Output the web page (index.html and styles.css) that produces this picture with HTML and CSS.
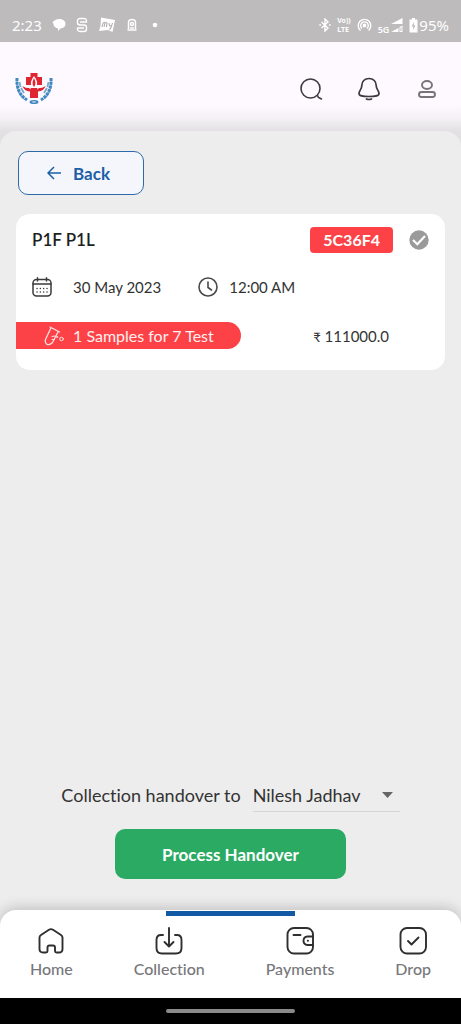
FILE: index.html
```html
<!DOCTYPE html>
<html lang="en">
<head>
<meta charset="utf-8">
<meta name="viewport" content="width=device-width, initial-scale=1">
<title>Collection handover</title>
<link rel="stylesheet" href="styles.css">
</head>
<body>
<div class="status">
  <div class="status-left">
    <span>2:23</span>
    <svg width="14" height="14" viewBox="0 0 14 14" fill="#fff"><path d="M7 1C10.500 1 13.500 2.800 13.500 6C13.500 9 11 10 8.500 10.500L6 13V10.500C3 10 1.500 8 1.500 6L.5 4L2.500 2.500Q4 1 7 1Z"/></svg>
    <svg width="12" height="16" viewBox="0 0 12 16" fill="none" stroke="#fff" stroke-width="1.400"><path d="M10.500 5.500V4Q10.500 1.500 8 1.500H4Q1.500 1.500 1.500 4V5.500Q1.500 8 4 8H8Q10.500 8 10.500 10.500V12Q10.500 14.500 8 14.500H4Q1.500 14.500 1.500 12V10.500M4 5H10.500M1.500 11H8"/></svg>
    <svg width="18" height="16" viewBox="0 0 18 16"><path fill="#fff" d="M3 .5L17 3L14.500 15L10 13L1 14L2.500 9Z"/><path d="M4 10L5 6Q7 4.500 7 6L6 10M7 6Q9 4.500 9 6L8.500 10M11 6L11.500 9H13M14.500 6L12.500 12H11" fill="none" stroke="#aaa8a9"/></svg>
    <svg width="12" height="16" viewBox="0 0 12 16" fill="none" stroke="#fff" stroke-width="1.500"><path d="M2.500 12V5.500Q2.500 2.500 6 2.500T9.500 5.500V12M1.500 13H10.500M4 11H8"/><circle cx="6" cy="7" r="1.500"/></svg>
    <svg class="more" width="6" height="6" viewBox="0 0 6 6"><circle cx="3" cy="3" r="2.300" fill="#fff"/></svg>
  </div>
  <div class="status-right">
    <svg width="12" height="14" viewBox="0 0 12 14" fill="none" stroke="#fff" stroke-width="1.400"><path d="M2.500 4L9 10L6 13V1L9 4L2.500 10M.3 7H2M10 7H11.700"/></svg>
    <span class="volte"><span>Vo))</span><span>LTE</span></span>
    <svg width="15" height="14" viewBox="0 0 15 14" fill="none" stroke="#fff" stroke-width="1.400"><path d="M3.500 12.500A6.300 6.300 0 1 1 11.500 12.500M5 10.500A3.800 3.800 0 1 1 10 10.500"/><circle cx="7.500" cy="7.500" r="1.200" fill="#fff"/></svg>
    <span class="net">5G</span>
    <svg class="signal" width="13" height="16" viewBox="0 0 13 16"><path fill="#fff" d="M1 7L12.500 1V7ZM1 15L8.500 11V15ZM9.500 10L12.500 8.500V15H9.500Z"/><path d="M10.500 11V14H11.500V10Z" fill="#bdbbbc"/></svg>
    <svg class="battery" width="9" height="15" viewBox="0 0 9 15"><path fill="#fff" d="M3 0H6V1.500H8.500V14.500H.5V1.500H3Z"/><path d="M5 4L2.500 8.500H4.200L4 12L6.500 7.500H4.800Z" fill="#bdbbbc"/></svg>
    <span>95%</span>
  </div>
</div>

<header class="header">
  <a class="logo" href="#" aria-label="Home page">
    <svg width="40" height="32" viewBox="0 0 40 32">
      <path d="M3 6Q2 20 10 26M37 6Q38 20 30 26" fill="none" stroke="#8db9da" stroke-width="1.500"/>
      <g fill="none" stroke="#4387bf" stroke-width="3">
        <path d="M3 5Q2 20 13 27" stroke-dasharray="3 .8"/>
        <path d="M37 5Q38 20 27 27" stroke-dasharray="3 .8"/>
      </g>
      <path d="M5.500 9L6.500 14M7 15L10 20M34.500 9L33.500 14M33 15L30 20" stroke="#75a9d1" stroke-width="1.800"/>
      <ellipse cx="20" cy="29" rx="4.500" ry="2" fill="#4387bf"/><ellipse cx="20" cy="29" rx="2" ry=".7" fill="#c9dfef"/>
      <path d="M16.500 0H23.500V4H28V12H12V4H16.500Z" fill="#e02430"/>
      <path d="M20 3Q15.500 9 17.500 13H22.500Q24.500 9 20 3Z" fill="#fff"/><path d="M20 5Q17 11 20 14Q23 11 20 5Z" fill="#e02430"/>
      <path d="M8.500 13Q11 15 18 15H22Q29 15 31.500 13Q30 18 24 18.500V25H16V18.500Q10 18 8.500 13Z" fill="#e02430"/>
      <path d="M11 14Q15 14 17 16M29 14Q25 14 23 16" fill="none" stroke="#fff" stroke-width=".8"/>
    </svg>
  </a>
  <div class="actions">
    <button aria-label="Search"><svg width="26" height="26" viewBox="0 0 26 26" fill="none" stroke="#3d393f" stroke-width="1.600" stroke-linecap="round"><circle cx="12.500" cy="12.500" r="9.500"/><path d="M19.500 19.500L20.500 21.500L23.500 23"/></svg></button>
    <button aria-label="Notifications"><svg width="26" height="26" viewBox="0 0 26 26" fill="none" stroke="#3d393f" stroke-width="1.700" stroke-linecap="round"><path d="M13 2.500C8.500 2.500 5.800 5.500 5.800 9.500C5.800 13.500 3 14.500 3 17.500C3 20 6 20.500 13 20.500S23 20 23 17.500C23 14.500 20.200 13.500 20.200 9.500C20.200 5.500 17.500 2.500 13 2.500Z"/><path d="M10.500 23Q13 24 15.500 23"/></svg></button>
    <button aria-label="Profile"><svg width="26" height="26" viewBox="0 0 26 26" fill="none" stroke="#77737a" stroke-width="1.900"><ellipse cx="13" cy="9" rx="5" ry="4"/><rect x="5" y="16" width="16" height="5" rx="2.500"/></svg></button>
  </div>
</header>

<main class="main">
  <button class="back"><svg width="14" height="14" viewBox="0 0 14 14" fill="none" stroke="#1b5fa6" stroke-width="1.500"><path d="M14 7H1.500M7 1L1 7L7 13"/></svg>Back</button>

  <article class="card">
    <div class="card-head">
      <h1>P1F P1L</h1>
      <span class="code">5C36F4</span>
      <svg width="20" height="20" viewBox="0 0 20 20"><circle cx="10" cy="10" r="9.700" fill="#9a9a9a"/><path d="M4 10L8.300 14.200L16 6" fill="none" stroke="#fff" stroke-width="2.200"/></svg>
    </div>
    <div class="when">
      <span class="date"><svg width="20" height="20" viewBox="0 0 20 20" fill="none" stroke="#3b3b3b" stroke-width="1.500" stroke-linecap="round"><rect x="1" y="2.500" width="18" height="16.500" rx="3.500"/><path d="M1 7H19M5.500 .8V4M14.500 .8V4"/><path d="M5 11.500H5.100M8.300 11.500H8.400M11.600 11.500H11.700M15 11.500H15.100M5 15H5.100M8.300 15H8.400M11.600 15H11.700M15 15H15.100" stroke-width="1.400"/></svg>30 May 2023</span>
      <span class="time"><svg width="20" height="20" viewBox="0 0 20 20" fill="none" stroke="#4a4a4a" stroke-width="1.600" stroke-linecap="round"><circle cx="10" cy="10" r="9"/><path d="M10 5V10.500L13.500 13"/></svg>12:00 AM</span>
    </div>
    <div class="totals">
      <span class="samples"><svg width="20" height="20" viewBox="0 0 20 20" fill="none" stroke="#ffdfdf" stroke-width="1.300" stroke-linecap="round" stroke-linejoin="round"><path d="M6 1L15.500 6M7 1.800L1.500 13.500Q.5 17 3 18.300T8.500 16.500L14 6"/><path d="M8 10.500L11 10M8 13.500H10.500" stroke-width="1"/><circle cx="17.500" cy="13" r="1.800" stroke-width="1"/><circle cx="13" cy="11" r=".7" stroke-width=".8"/></svg>1 Samples for 7 Test</span>
      <span class="price"><span class="rupee">₹</span> 111000.0</span>
    </div>
  </article>

  <form class="handover">
    <div class="assign">
      <label for="person">Collection handover to</label>
      <span class="picker">
        <select id="person"><option>Nilesh Jadhav</option></select>
        <svg width="11" height="6" viewBox="0 0 11 6"><path d="M0 0H11L5.500 6Z" fill="#666"/></svg>
      </span>
    </div>
    <button class="process" type="button">Process Handover</button>
  </form>
</main>

<nav class="nav">
  <a href="#"><svg width="28" height="28" viewBox="0 0 28 28" fill="none" stroke="#2f2f2f" stroke-width="1.900" stroke-linejoin="round"><path d="M2.500 10.500Q2.500 9 4 8L12 2.800Q14 1.500 16 2.800L24 8Q25.500 9 25.500 10.500V22Q25.500 25.500 22 25.500H19.500Q18 25.500 18 24V20.500Q18 18.500 16 18.500H12.500Q10.500 18.500 10.500 20.500V24Q10.500 25.500 9 25.500H6Q2.500 25.500 2.500 22Z"/></svg>Home</a>
  <a href="#" aria-current="page"><svg width="28" height="28" viewBox="0 0 28 28" fill="none" stroke="#2f2f2f" stroke-width="1.900" stroke-linecap="round" stroke-linejoin="round"><path d="M14 1V19M9.500 15L14 19.500L18.500 15M8 8H6Q1.500 8 1.500 13V21Q1.500 26.500 7 26.500H21Q26.500 26.500 26.500 21V13Q26.500 8 22 8H20"/></svg>Collection</a>
  <a href="#"><svg width="28" height="28" viewBox="0 0 28 28" fill="none" stroke="#2f2f2f" stroke-width="1.900" stroke-linecap="round"><rect x="1.500" y="1" width="25.500" height="25.500" rx="6.500"/><path d="M7.500 8H14.500M27 9.500H21.500Q17.500 10 17.500 13.800T21.500 18H27M21.800 13.800H22"/></svg>Payments</a>
  <a href="#"><svg width="28" height="28" viewBox="0 0 28 28" fill="none" stroke="#2f2f2f" stroke-width="1.900" stroke-linecap="round" stroke-linejoin="round"><rect x="1.500" y="1" width="25.500" height="25.500" rx="6.500"/><path d="M9 14L12.500 17.500L19.500 10.500"/></svg>Drop</a>
</nav>
<div class="gesture"><span></span></div>
</body>
</html>
```
FILE: styles.css
```css
* { box-sizing: border-box; }

body {
  margin: 0;
  min-height: 100vh;
  display: flex;
  flex-direction: column;
  background: #ededed;
  color: #333;
  font-family: Lato, "Noto Sans", sans-serif;
  font-size: 15px;
  font-variant-ligatures: none;
}

svg { display: block; flex: none; }
button, select { font: inherit; cursor: pointer; }

.status {
  height: 42px;
  padding: 8px 12px 0;
  display: flex;
  align-items: center;
  justify-content: space-between;
  background: #bdbbbc;
  color: #fff;
  font: 15px/20px "Noto Sans", sans-serif;
}
.status-left { display: flex; align-items: center; gap: 10px; }
.more { margin-left: 4px; }
.status-right { display: flex; align-items: center; gap: 6px; }
.volte { display: flex; flex-direction: column; font: 700 7px/9px "Noto Sans", sans-serif; }
.net { font: 600 9px/10px "Noto Sans", sans-serif; align-self: flex-end; }
.signal { margin-left: -5px; }
.status-right .battery + span { margin-left: -5px; }

.header {
  height: 105px;
  padding: 4px 21px 16px 14px;
  display: flex;
  align-items: center;
  justify-content: space-between;
  background: linear-gradient(#fdf9fe 60%, #f4f1f5 73%, #e2e0e2 85%);
}
.actions { display: flex; gap: 32px; }
.actions button { padding: 0; border: 0; background: none; }

.main {
  flex: 1;
  margin-top: -16px;
  padding: 20px 16px 31px;
  display: flex;
  flex-direction: column;
  border-radius: 16px 16px 0 0;
  background: #ededed;
}

.back {
  align-self: flex-start;
  height: 44px;
  margin-left: 2px;
  padding: 0 33px 0 28px;
  display: flex;
  align-items: center;
  gap: 12px;
  border: 1px solid #2d6ba8;
  border-radius: 10px;
  background: #f5f6fb;
  color: #1b5fa6;
  font-weight: 700;
  font-size: 17px;
}

.card {
  margin-top: 19px;
  padding: 12px 0 21px;
  border-radius: 14px;
  background: #fff;
}
.card-head { display: flex; align-items: center; padding: 0 16px; }
.card-head h1 { flex: 1; margin: 0; font-size: 17px; line-height: 28px; font-weight: 600; color: #1f1f1f; }
.code {
  margin-right: 16px;
  padding: 0 13px;
  border-radius: 4px;
  background: #fc4247;
  color: #fff;
  font-size: 16px;
  line-height: 26px;
  font-weight: 700;
}
.when { display: flex; gap: 37px; margin-top: 22px; padding: 0 16px; line-height: 22px; }
.date, .time { display: flex; align-items: center; }
.date { gap: 21px; }
.time { gap: 11px; }
.totals { display: flex; align-items: center; justify-content: space-between; margin-top: 24px; padding-right: 56px; }
.samples {
  display: flex;
  align-items: center;
  gap: 9px;
  padding: 0 27px 0 28px;
  border-radius: 0 14px 14px 0;
  background: #fc4247;
  color: #fff0f0;
  font-size: 16px;
  line-height: 27px;
}
.rupee { font-size: 13px; }

.handover { margin-top: auto; display: flex; flex-direction: column; align-items: center; gap: 17px; }
.assign { display: flex; align-items: center; gap: 12px; font-size: 18px; }
.picker { position: relative; border-bottom: 1px solid #d5d5d5; }
.picker svg { position: absolute; right: 7px; top: 14px; pointer-events: none; }
.picker select {
  appearance: none;
  display: block;
  height: 33px;
  padding: 0 38px 0 0;
  border: 0;
  background: none;
  color: #333;
}
.process {
  width: 54%;
  height: 50px;
  border: 0;
  border-radius: 10px;
  background: #2aaa63;
  color: #fff;
  font-size: 17px;
  font-weight: 700;
}

.nav {
  position: relative;
  height: 88px;
  padding: 17px 30px 0;
  display: flex;
  justify-content: space-between;
  border-radius: 16px 16px 0 0;
  background: #fff;
  box-shadow: 0 -2px 14px rgba(0, 0, 0, .2);
}
.nav::before {
  content: "";
  position: absolute;
  top: 1px;
  left: 36%;
  right: 36%;
  height: 5px;
  background: #125ba4;
}
.nav a {
  display: flex;
  flex-direction: column;
  align-items: center;
  gap: 4px;
  color: #77777b;
  font-size: 16px;
  line-height: 20px;
  font-weight: 500;
  text-decoration: none;
}
.gesture { position: relative; height: 26px; display: flex; align-items: center; justify-content: center; background: #000; }
.gesture span { width: 28%; height: 4px; border-radius: 2px; background: #8a8a8a; }
```
